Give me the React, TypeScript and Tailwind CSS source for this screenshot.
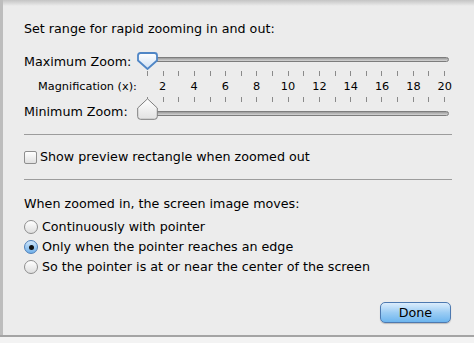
import React from 'react';

const ticks = Array.from({ length: 20 }, (_, i) => i + 1);

function Ticks() {
  return (
    <div className="ml-[123px] w-[298px] h-[5px] flex justify-between">
      {ticks.map(t => (
        <div key={t} className="w-px h-full bg-[#8a8a8a]" />
      ))}
    </div>
  );
}

function Track() {
  return (
    <div className="ml-[11px] w-[301px] h-[5px] rounded-full border border-[#7d7d7d] bg-gradient-to-b from-[#9a9a9a] to-[#d6d6d6]" />
  );
}

function MaxThumb() {
  return (
    <svg width="21" height="18" viewBox="0 0 21 18" className="absolute left-0 top-0">
      <defs>
        <linearGradient id="bt" x1="0" y1="0" x2="0" y2="1">
          <stop offset="0" stopColor="#ffffff" />
          <stop offset="1" stopColor="#cfe0f3" />
        </linearGradient>
      </defs>
      <path
        d="M3.5 1 H17.5 Q20 1 20 3.5 V8.5 L10.5 17 L1 8.5 V3.5 Q1 1 3.5 1 Z"
        fill="url(#bt)"
        stroke="#4f86c6"
        strokeWidth="1.8"
      />
    </svg>
  );
}

function MinThumb() {
  return (
    <svg width="21" height="22" viewBox="0 0 21 22" className="absolute left-0 top-[-4px]">
      <defs>
        <linearGradient id="wt" x1="0" y1="0" x2="0" y2="1">
          <stop offset="0" stopColor="#ffffff" />
          <stop offset="1" stopColor="#e2e2e2" />
        </linearGradient>
      </defs>
      <path
        d="M10.5 0.8 L20.3 10 V18.5 Q20.3 21.3 17.5 21.3 H3.5 Q0.7 21.3 0.7 18.5 V10 Z"
        fill="url(#wt)"
        stroke="#7e7e7e"
        strokeWidth="1"
      />
    </svg>
  );
}

function Radio({ checked }: { checked?: boolean }) {
  return (
    <div
      className={`w-[14px] h-[14px] rounded-full border flex items-center justify-center shrink-0 ${
        checked
          ? 'border-[#4f7fb8] bg-gradient-to-b from-[#cfe6fa] to-[#6fb0ea]'
          : 'border-[#8e8e8e] bg-gradient-to-b from-[#ffffff] to-[#dedede]'
      }`}
    >
      {checked && <div className="w-[5px] h-[5px] rounded-full bg-[#111]" />}
    </div>
  );
}

export default function App() {
  return (
    <div className="w-[474px] h-[343px] overflow-hidden bg-[#bdbdbd] flex flex-col font-['DejaVu_Sans',sans-serif] text-black">
      <div className="ml-[3px] w-[471px] h-[335px] bg-[#ececec] flex flex-col shrink-0">
        <div className="h-[6px] bg-gradient-to-b from-[#c4c4c4] to-[#ececec]" />

        <div className="pl-[21px] flex flex-col">
          <div className="mt-[15px] h-[16px] leading-[16px] text-[12.7px]">
            Set range for rapid zooming in and out:
          </div>

          {/* Maximum zoom */}
          <div className="mt-[15px] h-[18px] flex items-center">
            <div className="w-[113px] text-[12.7px] leading-[16px] pt-[2px]">Maximum Zoom:</div>
            <div className="relative w-[315px] h-[18px] pt-[5px]">
              <Track />
              <MaxThumb />
            </div>
          </div>

          <div className="mt-[1px]">
            <Ticks />
          </div>

          <div className="mt-[4px] h-[14px] flex items-center">
            <div className="w-[113px] pl-[14px] text-[11.3px] leading-[14px]">Magnification (x):</div>
            <div className="ml-[10px] w-[298px] flex justify-between">
              {ticks.map(t => (
                <div key={t} className="w-0 flex justify-center">
                  {t % 2 === 0 && (
                    <span className="text-[11.3px] leading-[14px] whitespace-nowrap">{t}</span>
                  )}
                </div>
              ))}
            </div>
          </div>

          <div className="mt-[3px]">
            <Ticks />
          </div>

          {/* Minimum zoom */}
          <div className="h-[20px] flex items-center">
            <div className="w-[113px] text-[12.7px] leading-[16px]">Minimum Zoom:</div>
            <div className="relative w-[315px] h-[20px] pt-[9px]">
              <Track />
              <MinThumb />
            </div>
          </div>

          <div className="mt-[12px] w-[428px] h-px bg-[#9c9c9c]" />

          <div className="mt-[14px] h-[16px] flex items-center gap-[3px]">
            <div className="w-[13px] h-[13px] rounded-[2px] border border-[#8e8e8e] bg-gradient-to-b from-[#ffffff] to-[#e0e0e0]" />
            <span className="text-[12.7px] leading-[16px]">Show preview rectangle when zoomed out</span>
          </div>

          <div className="mt-[14px] w-[428px] h-px bg-[#9c9c9c]" />

          <div className="mt-[16px] h-[16px] leading-[16px] text-[12.7px]">
            When zoomed in, the screen image moves:
          </div>

          <div className="mt-[5px] flex flex-col">
            <div className="h-[20px] flex items-center gap-[4px]">
              <Radio />
              <span className="text-[12.7px] leading-[16px]">Continuously with pointer</span>
            </div>
            <div className="h-[20px] flex items-center gap-[4px]">
              <Radio checked />
              <span className="text-[12.7px] leading-[16px]">Only when the pointer reaches an edge</span>
            </div>
            <div className="h-[20px] flex items-center gap-[4px]">
              <Radio />
              <span className="text-[12.7px] leading-[16px]">So the pointer is at or near the center of the screen</span>
            </div>
          </div>
        </div>

        <div className="mt-[25px] pl-[377px] flex">
          <div className="w-[71px] h-[21px] shrink-0 rounded-[5px] border border-[#4d79b0] bg-gradient-to-b from-[#dcedfc] via-[#9ccdf4] to-[#6cb5ee] flex items-center justify-center text-[12.7px] leading-[16px] shadow-[0_1px_1px_rgba(0,0,0,0.2)]">
            Done
          </div>
        </div>
      </div>
      <div className="flex-1 border-t-2 border-[#a4a4a4] bg-[#f3f3f3]" />
    </div>
  );
}
